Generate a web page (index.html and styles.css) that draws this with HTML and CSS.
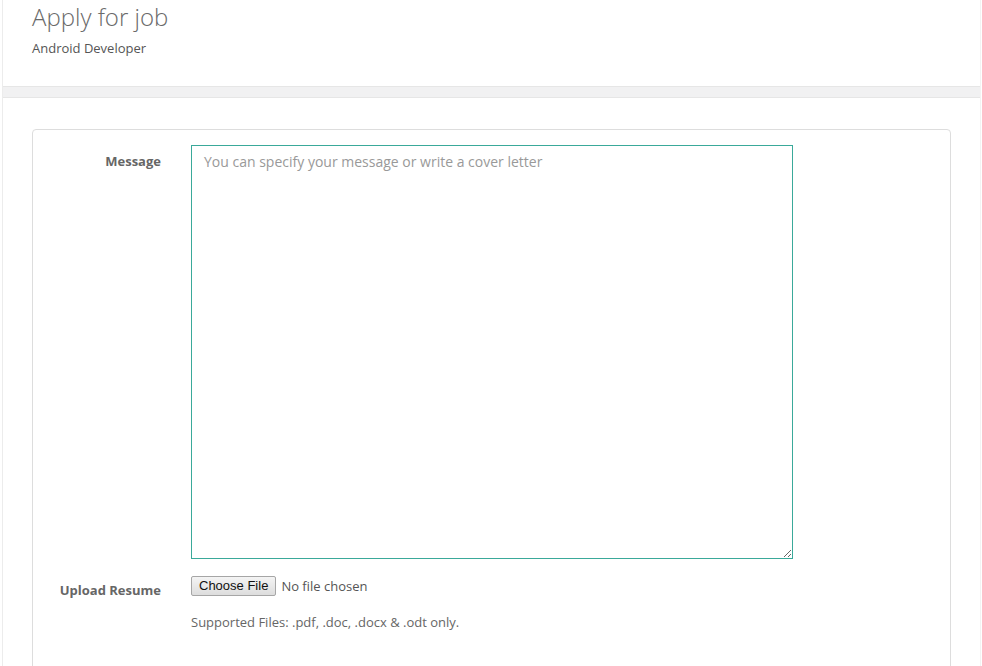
FILE: index.html
```html
<!DOCTYPE html>
<html>
<head>
<meta charset="utf-8">
<title>Apply for job</title>
<link rel="stylesheet" href="styles.css">
</head>
<body>
<div class="page">
  <header class="page-header">
    <h1 class="title">Apply for job</h1>
    <p class="subtitle">Android Developer</p>
  </header>
  <div class="band"></div>
  <main class="content">
    <form class="card">
      <div class="row">
        <label class="label" for="msg">Message</label>
        <textarea id="msg" class="message" placeholder="You can specify your message or write a cover letter"></textarea>
      </div>
      <div class="row row-upload">
        <label class="label label-upload" for="resume">Upload Resume</label>
        <div class="upload">
          <div class="file-line"><span class="file-btn">Choose File</span><span class="file-status">No file chosen</span></div>
          <p class="help">Supported Files: .pdf, .doc, .docx &amp; .odt only.</p>
        </div>
      </div>
    </form>
  </main>
</div>
</body>
</html>
```
FILE: styles.css
```css
html, body {
  margin: 0;
  padding: 0;
  background: #fff;
  height: 100%;
  overflow: hidden;
}
body {
  font-family: "Open Sans", "Noto Sans", sans-serif;
  font-size: 13px;
  color: #555;
}
.page {
  margin-left: 2px;
  margin-right: 1px;
  border-left: 1px solid #ececec;
  border-right: 1px solid #f3f3f3;
  min-height: 100%;
}
.page-header {
  height: 87px;
  box-sizing: border-box;
  padding: 0 0 0 29px;
  border-bottom: 1px solid #e6e6e6;
}
.title {
  margin: 0;
  padding-top: 2px;
  font-size: 24px;
  font-weight: 300;
  line-height: 30px;
  color: #6a6a6a;
}
.subtitle {
  margin: 7px 0 0;
  font-size: 13px;
  line-height: 18px;
  color: #555;
}
.band {
  height: 10px;
  background: #f1f1f2;
  border-bottom: 1px solid #e6e6e6;
}
.content {
  padding: 31px 29px 0 29px;
}
.card {
  border: 1px solid #dddddd;
  border-radius: 4px;
  padding: 15px 0 40px;
  height: 560px;
  box-sizing: border-box;
}
.row {
  display: grid;
  grid-template-columns: 128px 1fr;
  column-gap: 30px;
}
.label {
  text-align: right;
  font-weight: 700;
  color: #666;
  padding-top: 7px;
  line-height: 18px;
}
.message {
  display: block;
  width: 602px;
  height: 414px;
  box-sizing: border-box;
  border: 1px solid #3aa99a;
  border-radius: 0;
  padding: 6px 12px;
  font-family: "Open Sans", "Noto Sans", sans-serif;
  font-size: 14px;
  line-height: 20px;
  color: #555;
  outline: none;
  resize: both;
  margin: 0;
}
.message::placeholder {
  color: #999;
}
.row-upload {
  margin-top: 16px;
}
.label-upload {
  padding-top: 6px;
}
.file-line {
  display: flex;
  align-items: center;
  height: 21px;
}
.file-btn {
  display: inline-block;
  box-sizing: border-box;
  height: 20px;
  padding: 0 7px;
  border: 1px solid #a6a6a6;
  border-radius: 2px;
  background: linear-gradient(#f4f4f4, #dddddd);
  font-family: "Liberation Sans", Arial, sans-serif;
  font-size: 13px;
  line-height: 18px;
  color: #111;
}
.file-status {
  margin-left: 5px;
  color: #555;
  font-size: 13px;
}
.help {
  margin: 17px 0 0;
  font-size: 13px;
  line-height: 18px;
  color: #666;
}
```
